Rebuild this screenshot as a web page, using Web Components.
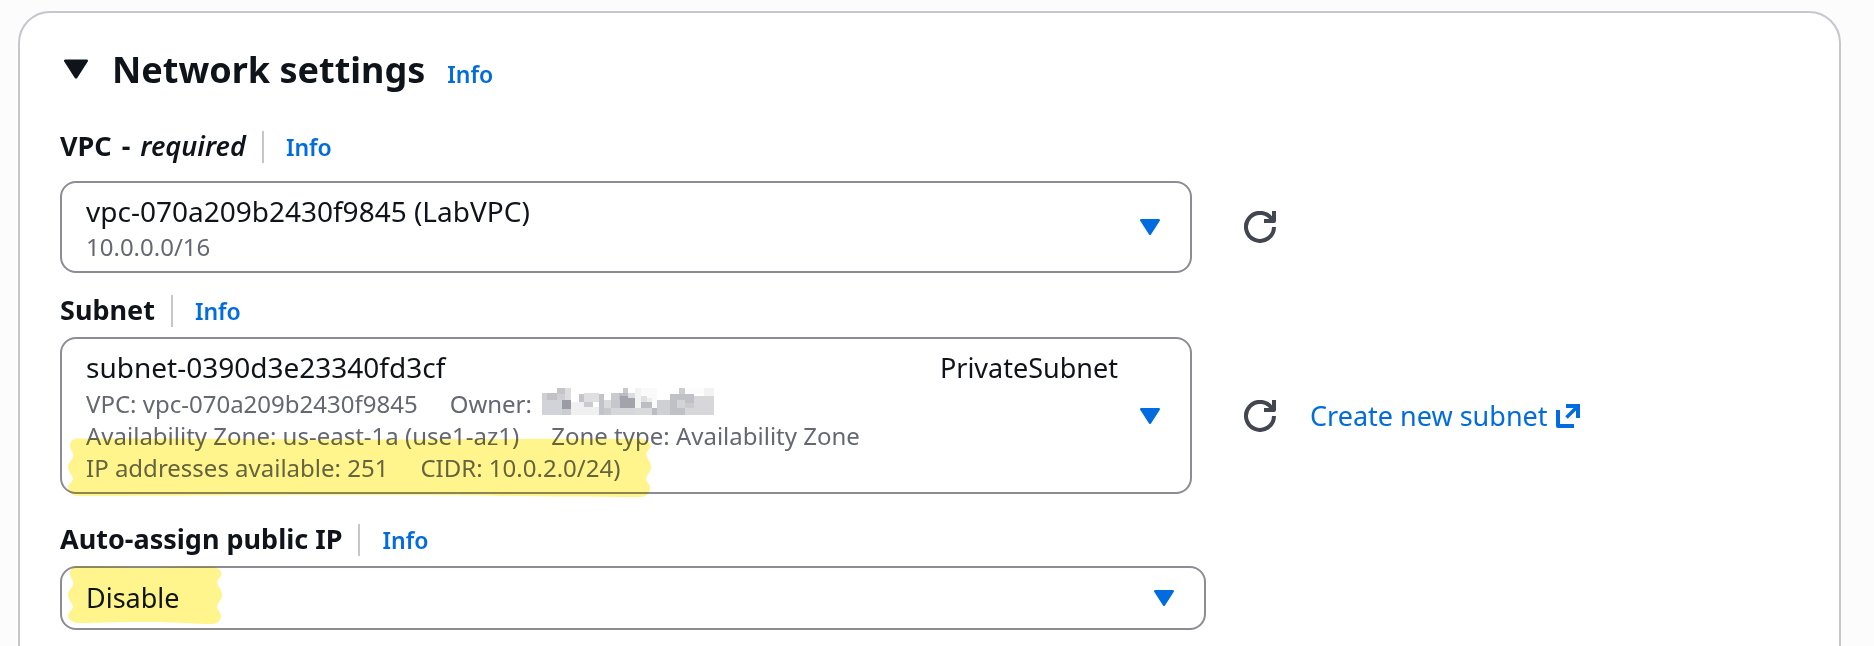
<!DOCTYPE html>
<html lang="en">
<head>
<meta charset="utf-8">
<title>Network settings</title>
<style>
  body {
    margin: 0;
    background: #fcfcfc;
    color: #0f141a;
    font: 28px/40px "Noto Sans", "Open Sans", sans-serif;
  }
</style>
</head>
<body>
<settings-panel heading="Network settings">
  <form-field label="VPC" hint="required" class="first">
    <rich-select label="VPC">
      <span slot="name">vpc-070a209b2430f9845 (LabVPC)</span>
      <detail-line>10.0.0.0/16</detail-line>
    </rich-select>
    <refresh-button slot="actions" label="Refresh VPCs"></refresh-button>
  </form-field>

  <form-field label="Subnet" class="second">
    <rich-select label="Subnet">
      <span slot="name">subnet-0390d3e23340fd3cf</span>
      <span slot="tag">PrivateSubnet</span>
      <detail-line><span>VPC: vpc-070a209b2430f9845</span><span>Owner: <masked-value></masked-value></span></detail-line>
      <detail-line><span>Availability Zone: us-east-1a (use1-az1)</span><span>Zone type: Availability Zone</span></detail-line>
      <detail-line><span>IP addresses available: 251</span><span>CIDR: 10.0.2.0/24)</span></detail-line>
    </rich-select>
    <marker-stroke slot="marker" width="583" height="59"></marker-stroke>
    <refresh-button slot="actions" label="Refresh subnets"></refresh-button>
    <external-link slot="actions" href="#create-subnet">Create new subnet</external-link>
  </form-field>

  <form-field label="Auto-assign public IP" class="third" wide>
    <plain-select label="Auto-assign public IP" options="Disable,Enable"></plain-select>
    <marker-stroke slot="marker" width="154" height="58"></marker-stroke>
  </form-field>
</settings-panel>

<script>
const define = (name, render) => customElements.define(name, class extends HTMLElement {
  connectedCallback() {
    if (this.shadowRoot) return;
    this.attachShadow({ mode: 'open' }).innerHTML = render(this);
  }
});

define('caret-icon', () => `
  <style>
    :host { display: block; flex: none; width: 20px; height: 16px; color: #006ce0; }
    svg { display: block; width: 100%; height: 100%; }
  </style>
  <svg viewBox="0 0 20 16" aria-hidden="true">
    <path d="M1.2 1.2H18.8L10 14.8Z" fill="currentColor" stroke="currentColor" stroke-width="2.4" stroke-linejoin="round"/>
  </svg>`);

define('info-link', () => `
  <style>
    :host { display: block; font-size: 23px; line-height: 32px; font-weight: 600; }
    a { color: #006ce0; text-decoration: none; }
  </style>
  <a href="#info">Info</a>`);

define('settings-panel', el => `
  <style>
    :host { display: block; height: 100vh; overflow: hidden; }
    section {
      box-sizing: border-box; min-height: calc(100% + 40px);
      margin: 11px 33px 0 18px; padding: 33px 40px 40px;
      background: #fff; border: 2px solid #c6c6cd; border-radius: 32px;
    }
    header { display: flex; align-items: baseline; gap: 22px; margin-bottom: 37px; }
    h2 { margin: 0; font-size: 36px; line-height: 48px; font-weight: 700; }
    button { display: block; padding: 0 0 0 4px; border: 0; background: none; color: inherit; font: inherit; }
    caret-icon {
      display: inline-block; width: 24px; height: 20px; margin-right: 24px;
      vertical-align: 4px; color: #0f141a;
    }
  </style>
  <section>
    <header>
      <h2><button type="button" aria-expanded="true"><caret-icon></caret-icon>${el.getAttribute('heading')}</button></h2>
      <info-link></info-link>
    </header>
    <slot></slot>
  </section>`);

define('form-field', el => `
  <style>
    :host { display: block; --marker-top: 0px; --gap: 10px; }
    :host(.first) { --gap: 18px; margin-bottom: 22px; }
    :host(.second) { --marker-top: 101px; margin-bottom: 30px; }
    .caption { display: flex; height: 32px; margin-bottom: var(--gap); }
    .label { display: flex; gap: 10px; font-size: 27px; line-height: 30px; font-weight: 700; }
    .label em { font-weight: 600; }
    .rule { width: 2px; margin: 0 22px 0 16px; background: #c6c6cd; }
    .row { display: flex; align-items: center; gap: 34px; }
    .control { position: relative; flex: 0 1 1132px; min-width: 0; margin-right: 18px; }
    :host([wide]) .control { flex-basis: 1146px; margin-right: 0; }
    ::slotted([slot="marker"]) { position: absolute; left: 8px; top: var(--marker-top); }
  </style>
  <div class="caption">
    <span class="label"><span>${el.getAttribute('label')}</span>${el.hasAttribute('hint') ? ` <span>-</span> <em>${el.getAttribute('hint')}</em>` : ''}</span>
    <span class="rule"></span>
    <info-link></info-link>
  </div>
  <div class="row">
    <div class="control"><slot></slot><slot name="marker"></slot></div>
    <slot name="actions"></slot>
  </div>`);

define('rich-select', el => `
  <style>
    :host { display: block; }
    button {
      box-sizing: border-box; display: flex; align-items: center; gap: 22px; width: 100%;
      padding: 8px 30px 8px 24px; border: 2px solid #8c8c94; border-radius: 16px;
      background: #fff; color: inherit; font: inherit; text-align: left;
    }
    .body { flex: 1; min-width: 0; white-space: nowrap; }
    .title { display: flex; align-items: baseline; justify-content: space-between; gap: 16px; }
    ::slotted([slot="tag"]) { font-size: 27px; }
  </style>
  <button type="button" aria-haspopup="listbox" aria-expanded="false">
    <span class="body">
      <span class="title"><slot name="name"></slot><slot name="tag"></slot></span>
      <slot></slot>
    </span>
    <caret-icon></caret-icon>
  </button>`);

define('detail-line', () => `
  <style>
    :host { display: flex; gap: 32px; font-size: 24px; line-height: 32px; color: #656871; }
    ::slotted(span) { display: flex; gap: 10px; }
  </style>
  <slot></slot>`);

define('plain-select', el => `
  <style>
    :host { display: grid; align-items: center; }
    select, caret-icon { grid-area: 1 / 1; }
    select {
      appearance: none; box-sizing: border-box; width: 100%; height: 64px; margin: 0;
      padding: 0 60px 0 24px; border: 2px solid #8c8c94; border-radius: 16px;
      background: #fff; color: inherit; font: inherit; font-size: 27px; line-height: 40px;
    }
    caret-icon { justify-self: end; margin-right: 32px; pointer-events: none; }
  </style>
  <select aria-label="${el.getAttribute('label')}">
    ${el.getAttribute('options').split(',').map(o => `<option>${o}</option>`).join('')}
  </select>
  <caret-icon></caret-icon>`);

define('refresh-button', el => `
  <style>
    :host { display: block; flex: none; }
    button { display: block; padding: 0; border: 0; background: none; color: #424650; }
    svg { display: block; width: 32px; height: 32px; }
  </style>
  <button type="button" aria-label="${el.getAttribute('label')}">
    <svg viewBox="0 0 32 32" fill="none" stroke="currentColor" stroke-width="4" aria-hidden="true">
      <path d="M30 16A14 14 0 1 1 28.6 9.8"/>
      <path d="M30 0V10H20" stroke-linejoin="round"/>
    </svg>
  </button>`);

define('external-link', el => `
  <style>
    :host { display: block; flex: none; font-size: 27px; line-height: 40px; }
    a { display: flex; align-items: center; gap: 8px; color: #006ce0; text-decoration: none; }
    svg { width: 24px; height: 24px; }
  </style>
  <a href="${el.getAttribute('href')}"><slot></slot>
    <svg viewBox="0 0 24 24" fill="none" stroke="currentColor" stroke-width="4" aria-hidden="true">
      <path d="M2 6V22H18" stroke-linejoin="round"/>
      <path d="M10 2H22V14"/>
      <path d="M21 3L10.5 13.5" stroke-width="3.6"/>
    </svg>
  </a>`);

/* Pixelated block that hides the account number: x, y, width, height, colour. */
const MOSAIC = [
  [0,5,15,7,'#cfcfd3'],[5,5,10,7,'#c1c1c6'],[15,0,8,6,'#c4c4c9'],[23,0,6,12,'#dddde0'],[15,6,8,6,'#cfcfd3'],
  [0,12,20,15,'#d2d3d8'],[20,12,9,9,'#9a9ba5'],[20,21,9,6,'#cbccd2'],
  [29,14,28,13,'#f0f0f1'],[37,6,5,8,'#c3c4c9'],[42,5,15,9,'#dfdfe2'],[42,14,9,5,'#cbccd0'],[51,14,6,5,'#ffffff'],
  [57,6,5,21,'#c2c3c8'],[62,12,7,8,'#dadadd'],[62,20,7,7,'#c8c9cd'],[69,5,12,7,'#c9cacf'],[81,0,5,5,'#c8c9ce'],[77,5,9,7,'#bcbdc3'],
  [69,12,9,8,'#c6c7cc'],[78,8,15,12,'#a3a4ab'],[86,5,7,5,'#dcdde0'],[69,20,26,7,'#d6d7da'],
  [93,0,6,20,'#f2f4f4'],[99,0,16,20,'#fafafa'],[99,8,6,7,'#dfe0e2'],[105,10,5,5,'#ececee'],[99,14,11,6,'#bdbec3'],
  [93,20,17,7,'#d9dadc'],[110,20,5,7,'#bbbcc1'],[115,12,13,15,'#cfd0d4'],
  [128,6,15,21,'#c0c1c6'],[137,0,6,6,'#cccdd2'],[135,12,8,8,'#d3d4d7'],[143,6,9,9,'#c0c1c6'],[143,15,9,5,'#cacbcf'],
  [143,20,29,7,'#d7d7d9'],[152,8,20,12,'#d7d7d9'],[143,0,19,6,'#fcfcfc'],[162,0,10,8,'#f3f3f4']
];
define('masked-value', () => `
  <style>
    :host { display: block; height: 27px; }
    svg { display: block; width: 172px; height: 27px; }
  </style>
  <svg viewBox="0 0 172 27" shape-rendering="crispEdges" role="img" aria-label="Hidden">
    ${MOSAIC.map(([x, y, w, h, c]) => `<rect x="${x}" y="${y}" width="${w}" height="${h}" fill="${c}"/>`).join('')}
  </svg>`);

/* Highlighter stroke with wavy ends, sized by its width and height attributes. */
define('marker-stroke', el => {
  const w = +el.getAttribute('width'), h = +el.getAttribute('height');
  return `
  <style>
    :host { display: block; mix-blend-mode: multiply; pointer-events: none; }
    svg { display: block; }
  </style>
  <svg width="${w}" height="${h}" aria-hidden="true">
    <path fill="#fff58c" d="M8 .5C${w * .3} 0 ${w * .4} 2 ${w * .55} 1.5S${w - 30} .5 ${w - 8} 1
      C${w - 3} 2 ${w + 1} 6 ${w - 1} 10C${w - 3} 13 ${w - 6} 14 ${w - 4} 19C${w - 2} 23 ${w} 25 ${w} 29
      C${w} 34 ${w - 4} 36 ${w - 5} 41C${w - 5} 44 ${w - 1} 46 ${w - 1} 50C${w - 1} 55 ${w - 5} ${h} ${w - 10} ${h}
      C${w * .8} ${h} ${w * .7} ${h - 2} ${w * .5} ${h - 2}S${w * .2} ${h - 1} 9 ${h - 1}
      C4 ${h - 2} 0 ${h - 5} 0 50C0 46 4 45 5 41C5 37 0 34 0 29C0 24 4 23 5 19C6 14 2 12 2 8C2 3 5 1 8 .5Z"/>
  </svg>`;
});
</script>
</body>
</html>
